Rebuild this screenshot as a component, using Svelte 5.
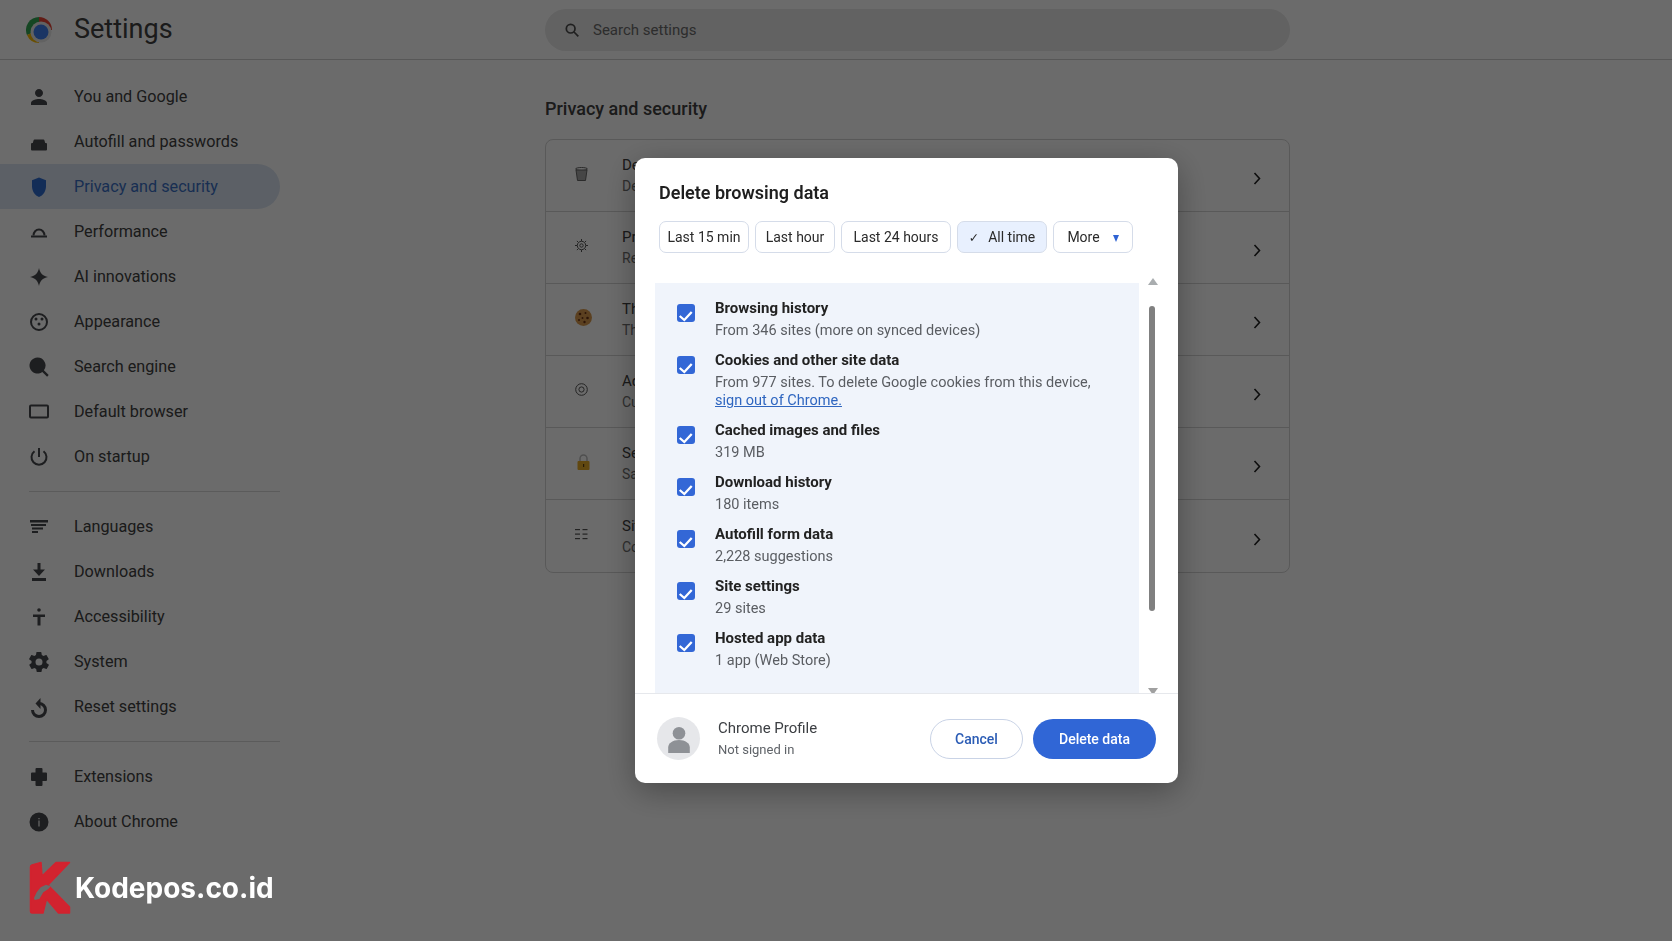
<script>
  const navGroups = [
    [
      { label: "You and Google", fill: "M12 12c2.2 0 4-1.8 4-4s-1.8-4-4-4-4 1.8-4 4 1.8 4 4 4zm0 2c-2.7 0-8 1.3-8 4v2h16v-2c0-2.7-5.3-4-8-4z" },
      { label: "Autofill and passwords", fill: "M7.500 9.500h9q.7 0 .9.700l.8 2.800H19q1 0 1 1v5.500q0 1-1 1H5q-1 0-1-1V14q0-1 1-1h.8l.8-2.800q.2-.7.9-.7z" },
      { label: "Privacy and security", fill: "M12 2.500 5 5.200v6c0 5 3 9.300 7 10.800 4-1.500 7-5.800 7-10.800v-6z", active: true },
      { label: "Performance", fill: "M4 17.500v-2h16v2z", stroke: "M6.500 15.500a5.500 6 0 0 1 11 0" },
      { label: "AI innovations", fill: "M12 3c1 5 3.500 7.800 9 9-5.500 1.200-8 4-9 9-1-5-3.500-7.800-9-9 5.500-1.200 8-4 9-9z" },
      { label: "Appearance", stroke: "M12 4a8 8 0 1 0 0 16 8 8 0 0 0 0-16z", fill: "M9 7.500a1.500 1.500 0 1 1 0 3 1.500 1.500 0 0 1 0-3zm6 0a1.500 1.500 0 1 1 0 3 1.500 1.500 0 0 1 0-3zm-3 5a1.500 1.500 0 1 1 0 3 1.500 1.500 0 0 1 0-3z" },
      { label: "Search engine", fill: "M10.500 2.500a8 8 0 0 1 6.400 12.800l4.800 4.800-1.600 1.600-4.800-4.800A8 8 0 1 1 10.500 2.500z" },
      { label: "Default browser", stroke: "M4 5.500h16a1 1 0 0 1 1 1v10a1 1 0 0 1-1 1H4a1 1 0 0 1-1-1v-10a1 1 0 0 1 1-1z" },
      { label: "On startup", stroke: "M12 3v9M7.500 6.200a7.500 7.500 0 1 0 9 0" }
    ],
    [
      { label: "Languages", fill: "M3 5h18v2.500H3zM4 9h15v2H4zM5 12.500h11v2H5zM5 16h6v2H5z" },
      { label: "Downloads", fill: "M10.500 3h3v6.500H18L12 16 6 9.500h4.500zM5 18h14v3H5z" },
      { label: "Accessibility", fill: "M12 3.200a1.800 1.800 0 1 1 0 3.600 1.800 1.800 0 0 1 0-3.600zM6 9.500h12V12h-4.500v8.500h-3V12H6z" },
      { label: "System", fill: "M19.400 13c0-.3.100-.6.100-1s0-.7-.1-1l2.100-1.600c.2-.2.200-.4.100-.6l-2-3.500c-.1-.2-.4-.3-.6-.2l-2.500 1c-.5-.4-1.100-.7-1.700-1l-.4-2.600c0-.3-.2-.5-.5-.5h-4c-.3 0-.5.200-.5.400l-.4 2.700c-.6.200-1.200.6-1.700 1l-2.500-1c-.2-.1-.5 0-.6.200l-2 3.500c-.1.200-.1.500.1.600L4.600 11c0 .3-.1.600-.1 1s0 .7.100 1l-2.100 1.600c-.2.200-.2.400-.1.600l2 3.500c.1.200.4.300.6.200l2.500-1c.5.400 1.100.7 1.700 1l.4 2.600c0 .3.200.5.500.5h4c.3 0 .5-.2.500-.4l.4-2.700c.6-.2 1.200-.6 1.700-1l2.500 1c.2.100.5 0 .6-.2l2-3.500c.1-.2.100-.5-.1-.6zM12 15.500a3.500 3.500 0 1 1 0-7 3.500 3.500 0 0 1 0 7z" },
      { label: "Reset settings", fill: "M8.500 8.500 13.500 3v11z", stroke: "M12 8.500a6.500 6.500 0 1 1-6.500 6.500", width: 3 }
    ],
    [
      { label: "Extensions", fill: "M8.500 4q0-1 1-1h5q1 0 1 1v3.500H19q1 0 1 1v6.500q0 1-1 1h-3.500V20q0 1-1 1h-5q-1 0-1-1v-4H5q-1 0-1-1V8.500q0-1 1-1h3.500z" },
      { label: "About Chrome", fill: "M12 2.500a9.500 9.500 0 1 1 0 19 9.500 9.500 0 0 1 0-19zm-.6 8v6h1.200v-6zm0-2.500v1.300h1.200V8z" }
    ]
  ];

  const privacyRows = [
    { title: "Delete browsing data", text: "Delete history, cookies, cache, and more", icon: "trash" },
    { title: "Privacy guide", text: "Review key privacy and security controls", icon: "gear" },
    { title: "Third-party cookies", text: "Third-party cookies are blocked in Incognito mode", icon: "cookie" },
    { title: "Ad privacy", text: "Customize the info used by sites to show you ads", icon: "target" },
    { title: "Security", text: "Safe Browsing and other security settings", icon: "lock" },
    { title: "Site settings", text: "Controls what information sites can use and show", icon: "list" }
  ];

  const deleteRows = [
    { title: "Browsing history", text: "From 346 sites (more on synced devices)" },
    { title: "Cookies and other site data", text: "From 977 sites. To delete Google cookies from this device,", link: "sign out of Chrome." },
    { title: "Cached images and files", text: "319 MB" },
    { title: "Download history", text: "180 items" },
    { title: "Autofill form data", text: "2,228 suggestions" },
    { title: "Site settings", text: "29 sites" },
    { title: "Hosted app data", text: "1 app (Web Store)" }
  ];
</script>

<div class="page">
  <header class="topbar">
    <div class="brand">
      <svg class="chrome" width="26" height="26" viewBox="0 0 26 26">
        <path d="M13 13 13 0A13 13 0 0 1 26 13z" fill="#ea4335" />
        <path d="M13 13 13 0A13 13 0 0 0 1 18z" fill="#34a853" />
        <path d="M13 13 1 18A13 13 0 0 0 13 26z" fill="#fbbc04" />
        <circle cx="15" cy="15" r="10.500" fill="#e9e9e9" />
        <circle cx="15" cy="15" r="7.500" fill="#3f7fef" />
      </svg>
      <h1>Settings</h1>
    </div>
    <div class="search">
      <svg width="16" height="16" viewBox="0 0 24 24" fill="none" stroke="#4a4a4a" stroke-width="2.600">
        <circle cx="10" cy="10" r="6.500" />
        <path d="M15 15l6.500 6.500" />
      </svg>
      <span>Search settings</span>
    </div>
  </header>

  <div class="layout">
    <nav class="sidebar">
      {#each navGroups as group, i}
        {#if i > 0}<div class="nav-divider"></div>{/if}
        {#each group as item}
          <div class="nav-item" class:active={item.active}>
            <svg width="24" height="24" viewBox="0 0 24 24">
              {#if item.stroke}<path class="line" d={item.stroke} stroke-width={item.width || 2} />{/if}
              {#if item.fill}<path class="solid" d={item.fill} />{/if}
            </svg>
            <span>{item.label}</span>
          </div>
        {/each}
      {/each}
    </nav>

    <main class="main">
      <h2>Privacy and security</h2>
      <section class="card">
        {#each privacyRows as row}
          <div class="row">
            <div class="row-icon">
              {#if row.icon === "trash"}
                <svg width="13" height="14" viewBox="0 0 13 14">
                  <ellipse cx="6.500" cy="2" rx="6" ry="1.500" fill="none" stroke="#666" />
                  <path d="M1 3l1.500 10.500h8L12 3z" fill="#a8a8a8" stroke="#666" />
                </svg>
              {:else if row.icon === "gear"}
                <svg width="13" height="13" viewBox="0 0 13 13" fill="none" stroke="#555">
                  <circle cx="6.500" cy="6.500" r="4.200" />
                  <circle cx="6.500" cy="6.500" r="1.700" />
                  <path d="M6.500 0v2M6.500 11v2M0 6.500h2M11 6.500h2M1.900 1.900l1.400 1.400M9.700 9.700l1.400 1.400M1.900 11.100l1.400-1.400M9.700 3.300l1.400-1.400" />
                </svg>
              {:else if row.icon === "cookie"}
                <svg width="17" height="17" viewBox="0 0 17 17">
                  <circle cx="8.500" cy="8.500" r="8.500" fill="#d99a4e" />
                  <circle cx="5" cy="5" r="1.300" fill="#6b3415" />
                  <circle cx="10.500" cy="4" r="1" fill="#6b3415" />
                  <circle cx="12.500" cy="9" r="1.300" fill="#6b3415" />
                  <circle cx="7.500" cy="9" r="1" fill="#6b3415" />
                  <circle cx="4" cy="11" r="1" fill="#6b3415" />
                  <circle cx="9.500" cy="13" r="1.200" fill="#6b3415" />
                </svg>
              {:else if row.icon === "target"}
                <svg width="13" height="13" viewBox="0 0 13 13" fill="none" stroke="#555">
                  <circle cx="6.500" cy="6.500" r="5.800" />
                  <circle cx="6.500" cy="6.500" r="2.600" />
                </svg>
              {:else if row.icon === "lock"}
                <svg class="lock" width="13" height="16" viewBox="0 0 13 16">
                  <path d="M3 7V4.500a3.500 3.500 0 0 1 7 0V7" fill="none" stroke="#bdbdbd" stroke-width="1.500" />
                  <rect x="0.500" y="7" width="12" height="9" rx="1" fill="#e8ab28" />
                  <rect x="6" y="10" width="1.200" height="3" fill="#5a3d10" />
                </svg>
              {:else}
                <svg width="13" height="12" viewBox="0 0 13 12" fill="#555">
                  <rect x="0" y="1" width="5" height="1.200" />
                  <rect x="7.500" y="1" width="5" height="1.200" />
                  <rect x="0" y="5.500" width="5" height="1.200" />
                  <rect x="7.500" y="5.500" width="5" height="1.200" />
                  <rect x="0" y="10" width="5" height="1.200" />
                  <rect x="7.500" y="10" width="5" height="1.200" />
                </svg>
              {/if}
            </div>
            <div class="row-text">
              <div class="row-title">{row.title}</div>
              <div class="row-sub">{row.text}</div>
            </div>
            <svg class="chevron" width="8" height="13" viewBox="0 0 8 13" fill="none" stroke="#222" stroke-width="1.600">
              <path d="M1.500 1l5 5.500-5 5.500" />
            </svg>
          </div>
        {/each}
      </section>
    </main>
  </div>
</div>

<div class="overlay">
  <div class="dialog">
    <h3>Delete browsing data</h3>
    <div class="chips">
      <button class="chip chip-15">Last 15 min</button>
      <button class="chip chip-hour">Last hour</button>
      <button class="chip chip-day">Last 24 hours</button>
      <button class="chip chip-all selected"><span class="tick">✓</span>All time</button>
      <button class="chip chip-more">More<span class="caret"></span></button>
    </div>

    <div class="content">
      <div class="list">
        {#each deleteRows as row}
          <div class="option">
            <span class="box">
              <svg width="18" height="18" viewBox="0 0 18 18" fill="none" stroke="#fff" stroke-width="2.300">
                <path d="M2.700 12l4.600 4 7.400-8" />
              </svg>
            </span>
            <div class="option-text">
              <div class="option-title">{row.title}</div>
              <div class="option-sub">
                {row.text}
                {#if row.link}<br /><a href="#top">{row.link}</a>{/if}
              </div>
            </div>
          </div>
        {/each}
      </div>
      <div class="scrollbar">
        <span class="arrow up"></span>
        <span class="thumb"></span>
        <span class="arrow down"></span>
      </div>
    </div>

    <footer class="footer">
      <div class="avatar">
        <svg width="26" height="30" viewBox="0 0 26 30" fill="#8e9196">
          <circle cx="13" cy="8" r="7" />
          <path d="M1 30v-6c0-5 5-8.500 12-8.500S25 19 25 24v6z" />
        </svg>
      </div>
      <div class="profile">
        <div class="profile-name">Chrome Profile</div>
        <div class="profile-state">Not signed in</div>
      </div>
      <button class="btn cancel">Cancel</button>
      <button class="btn primary">Delete data</button>
    </footer>
  </div>
</div>

<div class="watermark">
  <svg width="42" height="54" viewBox="0 0 42 54">
    <path d="M1.500 6Q1.500 4.500 3 4L12 1.500 13 15 27 1.500H40.500L19 24 40.500 46V52H29.500L17.500 38 14 52H3Q1.500 52 1.500 50z" fill="#d2232f" stroke="#d2232f" stroke-width="1.500" stroke-linejoin="round" />
    <path d="M5 37 7.700 31.300 11.700 26.300 17 23.700 21.700 25.300 19.300 28 14.300 31.300 10.300 38 5.700 39z" fill="#6b6b6b" />
  </svg>
  <span>Kodepos.co.id</span>
</div>

<style>
  :global(body) {
    margin: 0;
    background: #fff;
    font-family: Roboto, "Liberation Sans", sans-serif;
    overflow: hidden;
  }

  .page {
    height: 100vh;
    color: #404040;
  }

  /* top bar */
  .topbar {
    display: grid;
    grid-template-columns: 545px 745px;
    align-items: center;
    height: 59px;
    border-bottom: 1px solid #cfcfcf;
  }

  .brand {
    display: flex;
    align-items: center;
    padding-left: 26px;
    gap: 22px;
  }

  .brand h1 {
    margin: 0 0 1px;
    font-size: 27px;
    font-weight: 400;
    line-height: 32px;
  }

  .search {
    display: flex;
    align-items: center;
    gap: 13px;
    height: 42px;
    padding-left: 19px;
    border-radius: 21px;
    background: #e9e9e9;
    color: #6b6b6b;
    font-size: 15px;
  }

  .layout {
    display: flex;
  }

  /* sidebar */
  .sidebar {
    width: 300px;
    flex: none;
    padding-top: 14px;
    box-sizing: border-box;
  }

  .nav-item {
    display: flex;
    align-items: center;
    gap: 23px;
    width: 280px;
    height: 45px;
    padding-left: 27px;
    box-sizing: border-box;
    font-size: 16.200px;
    border-radius: 0 23px 23px 0;
  }

  .nav-item .solid {
    fill: #47484c;
  }

  .nav-item .line {
    fill: none;
    stroke: #47484c;
  }

  .nav-item.active {
    background: #dbe5f2;
    color: #3a6fc4;
  }

  .nav-item.active .solid {
    fill: #2f6bd0;
  }

  .nav-divider {
    width: 251px;
    height: 1px;
    margin: 12px 0 12px 29px;
    background: #d9d9d9;
  }

  /* main column */
  .main {
    width: 745px;
    margin-left: 245px;
    padding-top: 37px;
  }

  .main h2 {
    margin: 0 0 18px;
    font-size: 18px;
    font-weight: 500;
    line-height: 24px;
  }

  .card {
    box-sizing: border-box;
    height: 434px;
    border: 1px solid #d4d4d4;
    border-radius: 8px;
  }

  .row {
    display: flex;
    align-items: center;
    height: 72px;
    box-sizing: border-box;
    border-bottom: 1px solid #d4d4d4;
  }

  .row:last-child {
    border-bottom: 0;
  }

  .row-icon {
    display: flex;
    width: 47px;
    margin-left: 29px;
    margin-bottom: 4px;
    flex: none;
  }

  .row-icon .lock {
    margin-left: 2px;
  }

  .row-text {
    flex: 1;
  }

  .row-title {
    font-size: 15px;
    line-height: 20px;
  }

  .row-sub {
    margin-top: 1px;
    font-size: 14px;
    line-height: 20px;
    color: #6f6f6f;
  }

  .chevron {
    margin: 6px 28px 0 0;
  }

  /* dialog */
  .overlay {
    position: fixed;
    inset: 0;
    display: flex;
    align-items: center;
    justify-content: center;
    padding-left: 141px;
    background: rgba(0, 0, 0, 0.58);
  }

  .dialog {
    width: 543px;
    height: 625px;
    display: flex;
    flex-direction: column;
    background: #fff;
    border-radius: 10px;
    overflow: hidden;
    box-shadow: 0 8px 32px rgba(0, 0, 0, 0.32);
    color: #1f1f1f;
  }

  .dialog h3 {
    margin: 23px 24px 16px;
    font-size: 18px;
    font-weight: 600;
    line-height: 24px;
  }

  .chips {
    display: flex;
    gap: 6px;
    margin: 0 24px 25px;
  }

  .chip {
    height: 32px;
    padding: 0;
    display: flex;
    align-items: center;
    justify-content: center;
    border: 1px solid #d5dce9;
    border-radius: 7px;
    background: #fff;
    color: #2a2a2a;
    font: 400 14px Roboto, sans-serif;
  }

  .chip-15 { width: 90px; }
  .chip-hour { width: 80px; }
  .chip-day { width: 110px; }
  .chip-all { width: 90px; }
  .chip-more { width: 80px; }

  .chip.selected {
    background: #e8f0fe;
  }

  .tick {
    margin-right: 9px;
    font-family: "DejaVu Sans", sans-serif;
    font-size: 12.500px;
  }

  .caret {
    width: 0;
    height: 0;
    margin: 2px 0 0 13px;
    border-left: 3.5px solid transparent;
    border-right: 3.5px solid transparent;
    border-top: 7px solid #2f63d3;
  }

  .content {
    display: flex;
    height: 415px;
    padding-left: 20px;
    overflow: hidden;
  }

  .list {
    width: 484px;
    height: 410px;
    margin-top: 5px;
    padding: 16px 0 0 22px;
    box-sizing: border-box;
    background: #f0f4fb;
    flex: none;
  }

  .option {
    display: flex;
    margin-bottom: 11px;
  }

  .box {
    width: 18px;
    height: 18px;
    margin: 5px 20px 0 0;
    flex: none;
    border-radius: 3px;
    background: #3367d6;
  }

  .box svg {
    display: block;
  }

  .option-title {
    font-size: 15px;
    font-weight: 700;
    line-height: 18px;
    color: #222;
  }

  .option-sub {
    margin-top: 5px;
    font-size: 14.500px;
    line-height: 18px;
    color: #5a5d62;
  }

  .option-sub a {
    color: #2f66c0;
  }

  .scrollbar {
    display: flex;
    flex-direction: column;
    align-items: center;
    width: 12px;
    margin-left: 7px;
    flex: none;
  }

  .arrow {
    width: 0;
    height: 0;
    margin-left: 2px;
    border-left: 5px solid transparent;
    border-right: 5px solid transparent;
    flex: none;
  }

  .arrow.up {
    border-bottom: 7px solid #a9adaf;
  }

  .arrow.down {
    margin-top: 77px;
    border-top: 7px solid #a0a0a0;
  }

  .thumb {
    width: 6px;
    height: 305px;
    margin-top: 21px;
    border-radius: 3px;
    background: #808080;
    flex: none;
  }

  .footer {
    display: flex;
    align-items: center;
    flex: 1;
    padding: 0 22px;
    border-top: 1px solid #e6e8ec;
  }

  .avatar {
    width: 43px;
    height: 43px;
    display: flex;
    align-items: flex-end;
    justify-content: center;
    border-radius: 50%;
    background: #e6e7ea;
    overflow: hidden;
  }

  .avatar svg {
    margin-bottom: 7px;
    height: 27px;
  }

  .profile {
    flex: 1;
    margin: 0 0 2px 18px;
  }

  .profile-name {
    font-size: 15px;
    line-height: 22px;
    color: #3c3f43;
  }

  .profile-state {
    margin-top: 2px;
    font-size: 13px;
    line-height: 18px;
    color: #5f6368;
  }

  .btn {
    height: 40px;
    border-radius: 20px;
    font: 500 14px Roboto, sans-serif;
  }

  .cancel {
    width: 93px;
    margin-right: 10px;
    border: 1px solid #c9d3e6;
    background: #fff;
    color: #2b5cb5;
  }

  .primary {
    width: 123px;
    border: 0;
    background: #3066d6;
    color: #fff;
  }

  /* site watermark on top of everything */
  .watermark {
    position: fixed;
    left: 29px;
    top: 861px;
    display: flex;
    align-items: center;
    gap: 4px;
  }

  .watermark span {
    color: #fff;
    font: 700 28px Inter, sans-serif;
  }
</style>
